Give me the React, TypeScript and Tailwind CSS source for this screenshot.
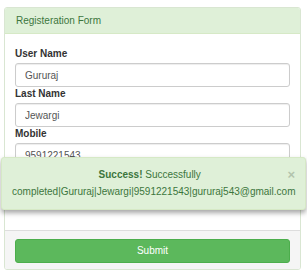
import React from "react";

function Field({ label, value }: { label: string; value: string }) {
  return (
    <div>
      <label className="block text-[10px] font-bold leading-[13px] text-[#333] mb-[3px]">
        {label}
      </label>
      <input
        readOnly
        value={value}
        className="block w-full h-[24px] px-[9px] text-[10px] text-[#555] bg-white border border-[#ccc] rounded-[3px] shadow-[inset_0_1px_1px_rgba(0,0,0,0.075)] outline-none"
      />
    </div>
  );
}

export default function App() {
  return (
    <div className="relative w-[307px] h-[276px] bg-white pt-[7px] pl-[4px] font-['Liberation_Sans',Arial,sans-serif]">
      {/* Panel */}
      <div className="w-[297px] border border-[#d9e6d2] rounded-[3px] overflow-hidden bg-white">
        <div className="h-[26px] flex items-center px-[11px] bg-[#dff0d8] border-b border-[#d6e9c6] text-[10px] text-[#3c763d]">
          Registeration Form
        </div>
        <div className="px-[10px] pt-[13px] pb-[23px]">
          <Field label="User Name" value="Gururaj" />
          <Field label="Last Name" value="Jewargi" />
          <Field label="Mobile" value="9591221543" />
          <Field label="Email" value="gururaj543@gmail.com" />
        </div>
        <div className="bg-[#f5f5f5] border-t border-[#ddd] px-[10px] pt-[6px] pb-[6px]">
          <button className="w-full h-[24px] rounded-[3px] bg-[#5cb85c] border border-[#4cae4c] text-white text-[10px]">
            Submit
          </button>
        </div>
      </div>

      {/* Alert */}
      <div className="absolute left-[1px] top-[157px] w-[305px] h-[53px] bg-[#dff0d8] border border-[#d6e9c6] rounded-[3px] shadow-[0_3px_5px_rgba(0,0,0,0.35)] px-[10px] pt-[8px] text-center text-[10px] leading-[17px] text-[#3c763d]">
        <span className="float-right text-[13px] leading-[17px] text-[#b3c4ad] font-bold">×</span>
        <strong>Success!</strong> Successfully completed|Gururaj|Jewargi|9591221543|gururaj543@gmail.com
      </div>
    </div>
  );
}
